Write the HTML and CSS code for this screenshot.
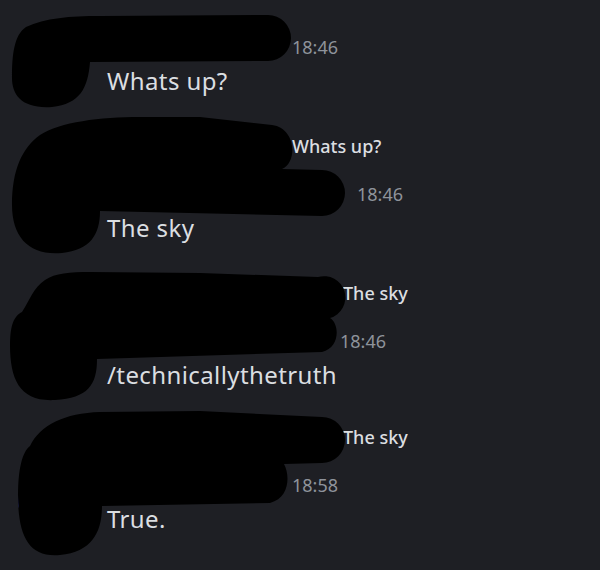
FILE: index.html
```html
<!DOCTYPE html>
<html lang="en">
<head>
    <meta charset="UTF-8">
    <meta name="viewport" content="width=device-width, initial-scale=1.0">
    <title>Chat</title>
    <link rel="stylesheet" href="styles.css">
</head>
<body>
    <div class="chat">
        <div class="message">
            <div class="avatar"></div>
            <div class="body">
                <div class="header"><span class="name name-s"></span><span class="time">18:46</span></div>
                <div class="text">Whats up?</div>
            </div>
        </div>

        <div class="message">
            <div class="reply"><span class="name name-s"></span><span class="reply-text">Whats up?</span></div>
            <div class="avatar"></div>
            <div class="body">
                <div class="header"><span class="name name-l"></span><span class="time">18:46</span></div>
                <div class="text">The sky</div>
            </div>
        </div>

        <div class="message">
            <div class="reply"><span class="name name-r"></span><span class="reply-text">The sky</span></div>
            <div class="avatar"></div>
            <div class="body">
                <div class="header"><span class="name name-m"></span><span class="time">18:46</span></div>
                <div class="text">/technicallythetruth</div>
            </div>
        </div>

        <div class="message last">
            <div class="reply"><span class="name name-r"></span><span class="reply-text">The sky</span></div>
            <div class="avatar"></div>
            <div class="body">
                <div class="header"><span class="name name-s"></span><span class="time">18:58</span></div>
                <div class="text">True.</div>
            </div>
        </div>

        <!-- scribbled-out names and avatars -->
        <svg class="redactions" viewBox="0 0 600 570" width="600" height="570">
            <path d="M 26 27 C 45 18 70 16 100 16 L 268 15 A 23 23 0 0 1 268 61 L 90 62 C 88 88 80 104 52 107 C 22 109 12 95 12 78 C 12 55 14 35 26 27 Z"/>
            <path d="M 40 135 C 60 122 100 117 140 117 L 200 117 L 272 125 C 296 128 298 162 282 169 L 322 170 A 23 23 0 0 1 322 216 L 100 211 C 100 235 90 250 62 253 C 30 256 12 238 12 205 C 12 170 22 148 40 135 Z"/>
            <path d="M 22 312 C 30 300 33 288 45 280 C 55 273 70 272 90 272 L 200 273 L 318 277 A 18 18 0 0 1 330 318 C 340 324 340 348 322 352 L 97 359 C 97 385 88 398 55 400 C 20 402 10 380 10 345 C 10 325 14 316 22 312 Z"/>
            <path d="M 30 446 C 40 425 65 413 100 412 L 200 411 L 322 417 A 23 23 0 0 1 322 463 L 284 464 C 290 475 290 498 270 503 L 102 506 C 102 532 92 552 60 555 C 28 558 18 535 18 495 C 18 470 22 452 30 446 Z"/>
        </svg>
    </div>
</body>
</html>
```

FILE: styles.css
```css
* {
    box-sizing: border-box;
    margin: 0;
    padding: 0;
}
html, body {
    height: 100%;
}
body {
    background-color: #1e1f24;
    color: #dbdee1;
    font-family: "Noto Sans", "Open Sans", sans-serif;
    overflow: hidden;
}
.chat {
    display: flex;
    flex-direction: column;
    gap: 31px;
    padding-top: 31px;
    position: relative;
    height: 100%;
}
.message {
    display: grid;
    grid-template-columns: 107px 1fr;
}
.message.last {
    margin-top: -3px;
}
.reply {
    align-items: center;
    display: flex;
    font-size: 18px;
    gap: 8px;
    grid-column: 2;
    line-height: 32px;
    margin-bottom: 16px;
}
.reply-text {
    font-weight: 500;
}
.avatar {
    background-color: #5865f2;
    border-radius: 50%;
    height: 56px;
    margin: 4px 0 0 18px;
    width: 56px;
}
.header {
    align-items: center;
    display: flex;
    gap: 8px;
    line-height: 32px;
}
.name {
    display: inline-block;
    height: 22px;
}
.name-s {
    width: 177px;
}
.name-m {
    width: 225px;
}
.name-r {
    width: 228px;
}
.name-l {
    width: 242px;
}
.time {
    color: #8e939b;
    font-size: 18px;
}
.text {
    font-size: 24px;
    letter-spacing: .4px;
    line-height: 36px;
}
.redactions {
    fill: #000;
    left: 0;
    pointer-events: none;
    position: absolute;
    top: 0;
}
```
